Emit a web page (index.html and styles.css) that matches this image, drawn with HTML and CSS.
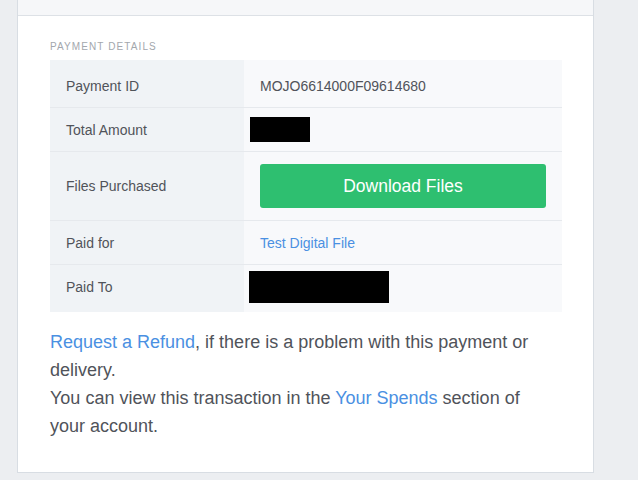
FILE: index.html
```html
<!DOCTYPE html>
<html>
<head>
<meta charset="utf-8">
<link rel="stylesheet" href="styles.css">
</head>
<body>
<div class="page">
  <div class="card">
    <div class="card-top"></div>
    <div class="card-body">
      <div class="section-title">PAYMENT DETAILS</div>
      <div class="details">
        <div class="row r1">
          <div class="label">Payment ID</div>
          <div class="value">MOJO6614000F09614680</div>
        </div>
        <div class="row r2">
          <div class="label">Total Amount</div>
          <div class="value"><span class="redact amount"></span></div>
        </div>
        <div class="row r3">
          <div class="label">Files Purchased</div>
          <div class="value"><a class="btn">Download Files</a></div>
        </div>
        <div class="row r4">
          <div class="label">Paid for</div>
          <div class="value"><a class="link">Test Digital File</a></div>
        </div>
        <div class="row r5">
          <div class="label">Paid To</div>
          <div class="value"><span class="redact payee"></span></div>
        </div>
      </div>
      <p class="note"><a class="link">Request a Refund</a>, if there is a problem with this payment or delivery.<br>You can view this transaction in the <a class="link">Your Spends</a> section of your account.</p>
    </div>
  </div>
</div>
</body>
</html>
```
FILE: styles.css
```css
html, body {
  margin: 0;
  padding: 0;
  background: #eceef1;
  font-family: "Liberation Sans", Arial, sans-serif;
  color: #50535a;
}
.page {
  padding-left: 17px;
  width: 577px;
}
.card {
  background: #fff;
  border: 1px solid #d8dde3;
  border-top: none;
}
.card-top {
  height: 15px;
  background: #f6f7f9;
  border-bottom: 1px solid #dde1e6;
}
.card-body {
  padding: 25px 32px 32px 32px;
}
.section-title {
  font-size: 10px;
  letter-spacing: 1.1px;
  color: #a3a7ad;
  line-height: 12px;
  margin-bottom: 7px;
}
.details {
  width: 512px;
}
.row {
  display: grid;
  grid-template-columns: 194px 1fr;
  border-bottom: 1px solid #e6e9ed;
  font-size: 14px;
}
.row:last-child {
  border-bottom: none;
}
.label {
  background: #f0f3f6;
  padding-left: 16px;
  display: flex;
  align-items: center;
}
.value {
  background: #f8f9fb;
  padding-left: 16px;
  display: flex;
  align-items: center;
}
.r1 { height: 47px; }
.r2 { height: 43px; }
.r3 { height: 68px; }
.r4 { height: 43px; }
.r5 { height: 47px; }
.r1 .label, .r1 .value { padding-top: 5px; }
.r5 .label, .r5 .value { padding-bottom: 4px; }
.r2 .value, .r5 .value { padding-left: 6px; }
.redact {
  display: block;
  background: #000;
}
.amount { width: 60px; height: 25px; }
.payee { width: 140px; height: 32px; margin-left: -1px; }
.btn {
  display: flex;
  align-items: center;
  justify-content: center;
  width: 286px;
  height: 44px;
  background: #2ebf70;
  border-radius: 3px;
  color: #fff;
  font-size: 17.5px;
}
.link {
  color: #4a90e2;
  text-decoration: none;
}
.note {
  margin: 16px 0 0 0;
  padding-right: 10px;
  font-size: 18px;
  line-height: 28px;
}
```
